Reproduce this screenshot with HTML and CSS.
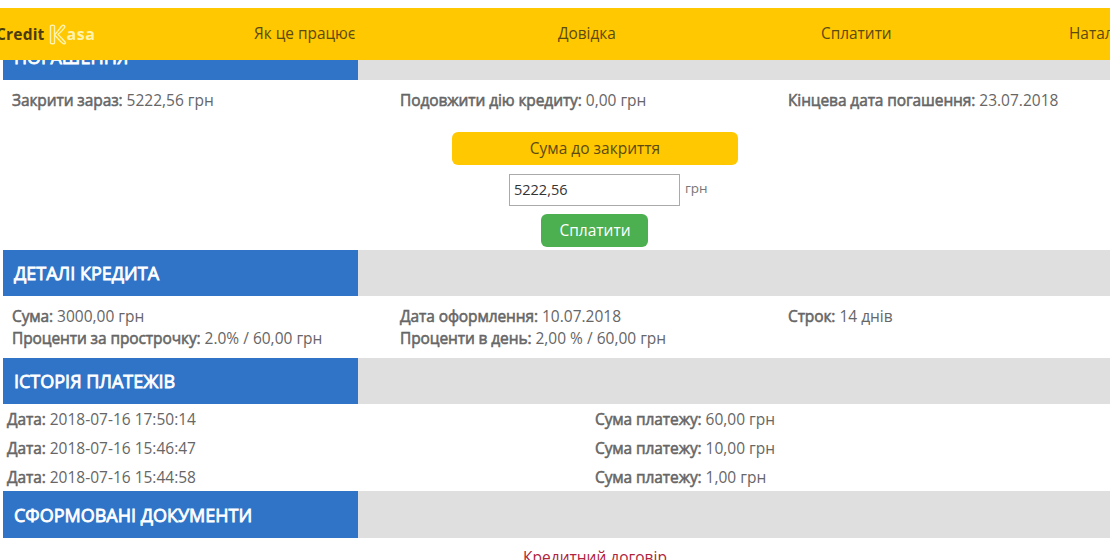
FILE: index.html
```html
<!DOCTYPE html>
<html lang="uk">
<head>
<meta charset="utf-8">
<title>Credit Kasa</title>
<link rel="stylesheet" href="styles.css">
</head>
<body>
<header class="topbar">
  <div class="logo"><span class="logo-dark">Credit</span>
    <svg class="logo-k" width="18" height="21" viewBox="0 0 18 21" fill="none" stroke="#fff3b0" stroke-width="1.4"><path d="M1.500 2c0-1.200 4-1.200 4 0v17c0 1.200-4 1.200-4 0zM5.500 11c3-3 5-6.500 7.500-9.300 1.500-1 3.500 0 2.500 2C13.500 6.500 11 9 9 10.500c2.500 2 4.500 5 7 7.500 1 1 0 2.500-2 1.500-3-2-5.500-6-8.500-8.500"/></svg><span class="logo-light">asa</span></div>
  <nav class="nav">
    <a class="nav-a">Як це працює</a>
    <a class="nav-b">Довідка</a>
    <a class="nav-c">Сплатити</a>
    <a class="nav-d">Наталія</a>
  </nav>
</header>
<main class="page">
  <section>
    <div class="bar"><h2 class="bar-title">ПОГАШЕННЯ</h2></div>
    <div class="cols repay">
      <p><b>Закрити зараз:</b> 5222,56 грн</p>
      <p><b>Подовжити дію кредиту:</b> 0,00 грн</p>
      <p><b>Кінцева дата погашення:</b> 23.07.2018</p>
    </div>
    <div class="pay">
      <div class="pay-label">Сума до закриття</div>
      <div class="pay-row"><input class="pay-input" value="5222,56"><span class="pay-unit">грн</span></div>
      <button class="pay-btn">Сплатити</button>
    </div>
  </section>
  <section>
    <div class="bar"><h2 class="bar-title">ДЕТАЛІ КРЕДИТА</h2></div>
    <div class="cols details">
      <div><p><b>Сума:</b> 3000,00 грн</p><p><b>Проценти за прострочку:</b> 2.0% / 60,00 грн</p></div>
      <div><p><b>Дата оформлення:</b> 10.07.2018</p><p><b>Проценти в день:</b> 2,00 % / 60,00 грн</p></div>
      <div><p><b>Строк:</b> 14 днів</p></div>
    </div>
  </section>
  <section>
    <div class="bar"><h2 class="bar-title">ІСТОРІЯ ПЛАТЕЖІВ</h2></div>
    <div class="history">
      <p><b>Дата:</b> 2018-07-16 17:50:14</p><p><b>Сума платежу:</b> 60,00 грн</p>
      <p><b>Дата:</b> 2018-07-16 15:46:47</p><p><b>Сума платежу:</b> 10,00 грн</p>
      <p><b>Дата:</b> 2018-07-16 15:44:58</p><p><b>Сума платежу:</b> 1,00 грн</p>
    </div>
  </section>
  <section>
    <div class="bar bar-last"><h2 class="bar-title">СФОРМОВАНІ ДОКУМЕНТИ</h2></div>
    <div class="docs"><a class="doc-link">Кредитний договір</a></div>
  </section>
</main>
</body>
</html>
```
FILE: styles.css
```css
* { box-sizing: border-box; }
html, body { height: 100%; }
body {
  margin: 0;
  overflow: hidden;
  background: #fff;
  font-family: "Open Sans", "Noto Sans", sans-serif;
  font-size: 15.500px;
  color: #666;
}
p { margin: 0; }
b { font-weight: 400; -webkit-text-stroke: .55px currentColor; letter-spacing: -.1px; }

.topbar {
  position: fixed;
  top: 8px;
  left: 0;
  right: 0;
  height: 52px;
  background: #ffc800;
  z-index: 10;
  color: #5b4a12;
  overflow: hidden;
}
.logo {
  position: absolute;
  left: -4px;
  top: 15px;
  display: flex;
  align-items: center;
  font-size: 15.500px;
  font-weight: 700;
  line-height: 22px;
  letter-spacing: .2px;
}
.logo-dark { color: #4a3b0c; margin-right: 4px; }
.logo-k { margin-right: 0; flex: none; }
.logo-light { color: #fff3b0; font-size: 16px; letter-spacing: .5px; }
.nav { font-size: 15.400px; line-height: 20px; }
.nav a { position: absolute; top: 16px; white-space: nowrap; }
.nav-a { left: 254px; }
.nav-b { left: 558px; }
.nav-c { left: 821px; }
.nav-d { left: 1069px; }

.page { padding: 34px 0 0 3px; }
.bar { height: 46px; background: #dfdfdf; }
.bar-last { height: 47px; }
.bar-title {
  margin: 0;
  width: 355px;
  height: 100%;
  padding: 0 11px;
  background: #3074c8;
  color: #fff;
  font-size: 18px;
  font-weight: 400;
  -webkit-text-stroke: .8px #fff;
  line-height: 46px;
  white-space: nowrap;
}
.bar-last .bar-title { line-height: 48px; }

.cols {
  display: grid;
  grid-template-columns: 388px 388px 1fr;
  padding-left: 9px;
}
.repay { height: 52px; padding-top: 9px; line-height: 22px; }
.details { height: 62px; padding-top: 9px; line-height: 22px; }

.pay {
  height: 118px;
  display: flex;
  flex-direction: column;
  align-items: center;
  width: 1184px;
}
.pay-label {
  width: 286px;
  height: 33px;
  background: #ffc800;
  border-radius: 6px;
  color: #5b4a12;
  text-align: center;
  line-height: 33px;
}
.pay-row {
  margin-top: 9px;
  display: flex;
  align-items: center;
  width: 200px;
  margin-left: 28px;
  gap: 5px;
}
.pay-input {
  width: 171px;
  height: 32px;
  border: 1px solid #aaa;
  padding: 0 4px 2px;
  font: 14.500px "Open Sans", "Noto Sans", sans-serif;
  color: #333;
  background: #fff;
  border-radius: 0;
  outline: none;
}
.pay-unit { font-size: 13.500px; color: #777; margin-top: -4px; }
.pay-btn {
  margin-top: 8px;
  margin-right: 2px;
  width: 107px;
  height: 33px;
  border: 0;
  border-radius: 6px;
  background: #4caf50;
  color: #fff;
  font: 15.500px "Open Sans", "Noto Sans", sans-serif;
  padding: 0 0 2px 2px;
}

.history {
  display: grid;
  grid-template-columns: 588px 1fr;
  grid-auto-rows: 29px;
  height: 87px;
  padding-left: 4px;
  line-height: 30px;
}
.docs { text-align: center; padding-top: 8px; width: 1184px; line-height: 22px; }
.doc-link { color: #b0233a; }
```
